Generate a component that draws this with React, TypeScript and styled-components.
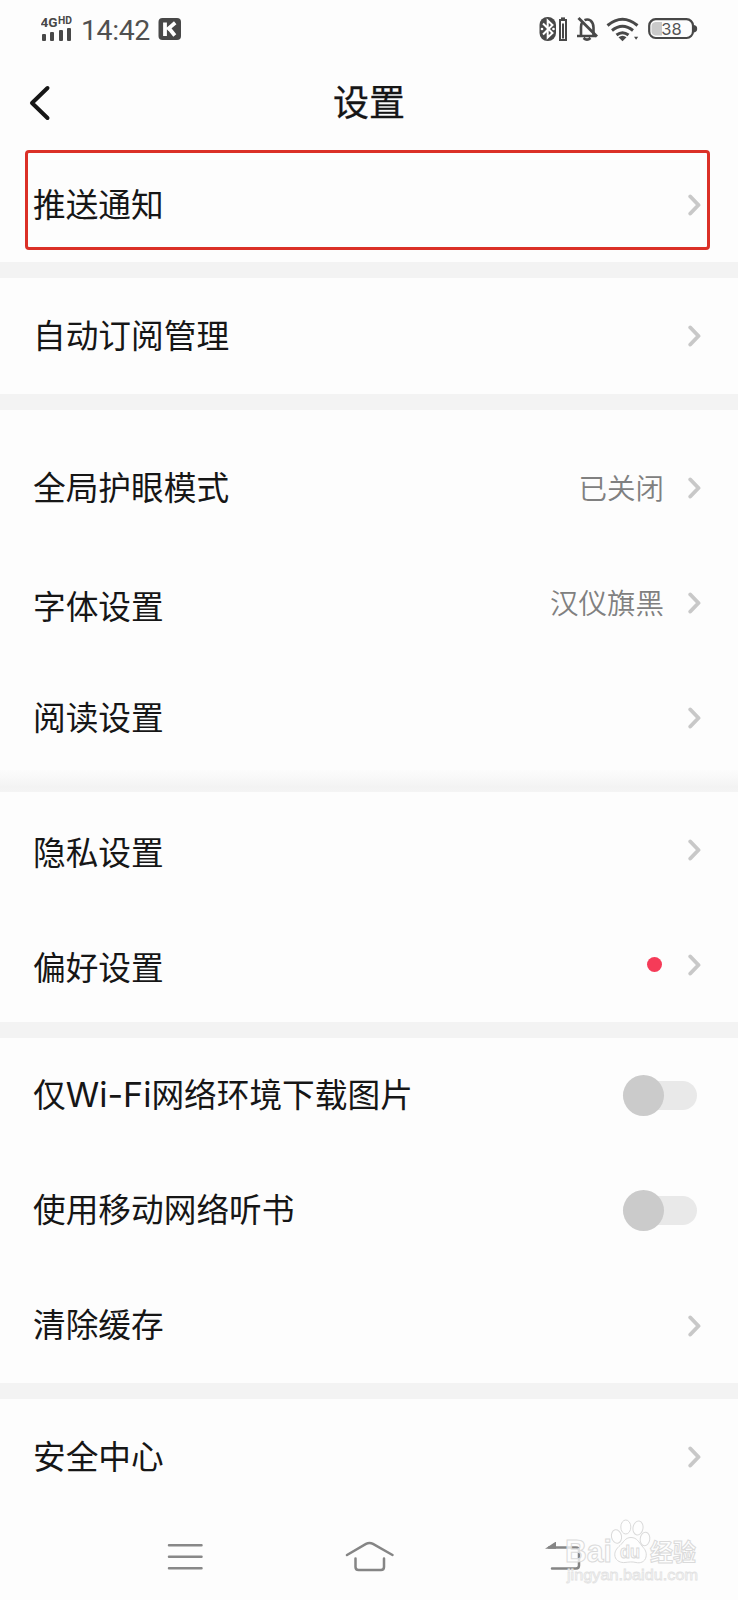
import React from "react";
import styled, { createGlobalStyle } from "styled-components";

const GlobalStyle = createGlobalStyle`
  * { box-sizing: border-box; }
  body {
    margin: 0;
    background: #fdfdfd;
    font-family: "Noto Sans CJK SC", sans-serif;
    color: #161616;
  }
  svg { display: block; flex: none; }
`;

const Screen = styled.div`
  position: relative;
  width: 738px;
  height: 1600px;
  overflow: hidden;
  background: #fdfdfd;
  display: flex;
  flex-direction: column;
`;

const StatusBar = styled.div`
  height: 58px;
  flex: none;
  padding: 0 40px 0 41px;
  display: flex;
  justify-content: space-between;
  align-items: center;
`;

const StatusGroup = styled.div<{ $gap?: number }>`
  display: flex;
  align-items: center;
  gap: ${(p) => p.$gap ?? 0}px;
`;

const Clock = styled.span`
  margin: 3px 8px 0 8px;
  width: 69px;
  font: 400 28.5px/32px Roboto, sans-serif;
  letter-spacing: -0.4px;
  color: #505050;
  white-space: nowrap;
`;

const Header = styled.header`
  height: 91px;
  flex: none;
  padding: 0 29px 2px;
  display: grid;
  grid-template-columns: 24px 1fr 24px;
  align-items: center;
`;

const Title = styled.h1`
  margin: 0;
  font-size: 36px;
  font-weight: 400;
  line-height: 54px;
  padding-bottom: 5px;
  text-align: center;
  -webkit-text-stroke: 0.3px #161616;
`;

const Section = styled.section<{ $top?: number; $bottom?: number }>`
  flex: none;
  padding-top: ${(p) => p.$top ?? 0}px;
  padding-bottom: ${(p) => p.$bottom ?? 0}px;
`;

const Divider = styled.div<{ $soft?: boolean }>`
  flex: none;
  height: ${(p) => (p.$soft ? 22 : 16)}px;
  margin-top: ${(p) => (p.$soft ? -5 : 0)}px;
  background: ${(p) =>
    p.$soft ? "linear-gradient(#fcfcfc, #f8f8f8 38%, #f3f3f3 75%, #f4f4f4)" : "#f3f3f3"};
`;

const RowBox = styled.div<{ $height: number }>`
  height: ${(p) => p.$height}px;
  padding: 0 37px 0 33px;
  display: flex;
  align-items: center;
  justify-content: space-between;
`;

const HighlightedRow = styled(RowBox)`
  margin: 0 28px 0 25px;
  padding: 10px 6px 0 5px;
  border: 3px solid #db3027;
  border-radius: 4px;
`;

const Label = styled.span<{ $drop?: number }>`
  font-size: 32.7px;
  line-height: 48px;
  padding-top: ${(p) => (p.$drop ?? 0) * 2}px;
  margin-top: -5px;
  white-space: nowrap;
`;

const Latin = styled.span`
  font-family: Inter, sans-serif;
  font-size: 34px;
  line-height: 1;
`;

const Trailing = styled.span`
  display: flex;
  align-items: center;
`;

const Value = styled.span`
  margin: -2px 24px 0 0;
  font-size: 28.5px;
  font-weight: 350;
  line-height: 40px;
  color: #808080;
`;

const Dot = styled.span`
  width: 15px;
  height: 15px;
  margin-right: 26px;
  border-radius: 50%;
  background: #f53b58;
`;

const Track = styled.span`
  width: 74px;
  height: 29px;
  margin-right: 4px;
  border-radius: 15px;
  background: #e9e9e9;
  display: flex;
  align-items: center;
`;

const Knob = styled.span`
  width: 41px;
  height: 41px;
  flex: none;
  border-radius: 50%;
  background: #cbcbcb;
`;

const NavBar = styled.nav`
  height: 86px;
  flex: none;
  padding: 0 154px 2px 167px;
  display: grid;
  grid-template-columns: 178px 1fr auto;
  align-items: center;
`;

const Watermark = styled.div`
  position: absolute;
  left: 560px;
  top: 1515px;
`;

function SignalIcon() {
  return (
    <svg width="32" height="28" viewBox="41 13 32 28" fill="#484848">
      <text x="40.5" y="25" fontFamily="Roboto" fontWeight="700" fontSize="13.5" textLength="17" lengthAdjust="spacingAndGlyphs">4G</text>
      <text x="58" y="22" fontFamily="Roboto" fontWeight="700" fontSize="10" textLength="14" lengthAdjust="spacingAndGlyphs">HD</text>
      <rect x="42" y="32" width="4" height="7" rx="1" />
      <rect x="50" y="30" width="4" height="9" rx="1" />
      <rect x="59" y="28" width="4" height="11" rx="1" />
      <rect x="67" y="26" width="4" height="13" rx="1" />
    </svg>
  );
}

function KBadge() {
  return (
    <svg width="24" height="24" viewBox="0 0 24 24">
      <rect x="0.5" y="1" width="22.5" height="22" rx="4" fill="#484848" />
      <path d="M7 5.5v13.5M17.2 5.8l-8 6.8M11.2 11.5l5.6 7" stroke="#fff" strokeWidth="3.8" fill="none" />
    </svg>
  );
}

function BluetoothIcon() {
  return (
    <svg width="30" height="28" viewBox="538 14 30 28">
      <rect x="539.5" y="16" width="16.5" height="24" rx="8" fill="#484848" />
      <path d="M543 22.5l9.5 9.5-4.8 4.5v-17l4.8 4.5-9.5 9.5" fill="none" stroke="#fff" strokeWidth="2" />
      <circle cx="542" cy="28" r="1.3" fill="#fff" />
      <circle cx="553.5" cy="28" r="1.3" fill="#fff" />
      <path d="M561 18v-1.6h4V18" fill="#484848" />
      <rect x="560" y="19" width="6" height="20" fill="#fff" stroke="#484848" strokeWidth="2" />
      <rect x="562" y="22.5" width="2" height="15" fill="#484848" />
    </svg>
  );
}

function MutedBellIcon() {
  return (
    <svg width="22" height="26" viewBox="576 16 22 26" fill="none" stroke="#484848" strokeWidth="2.6">
      <path d="M577 36h19M581 36v-9q0-3 1.5-5M584.5 20.2q3-1.5 6 0.3 3 2.5 3 7v8.5M583.5 38q3.5 3.2 7 0" />
      <path d="M578.5 18l18.5 18.5" strokeWidth="2.9" />
    </svg>
  );
}

function WifiIcon() {
  return (
    <svg width="34" height="26" viewBox="606 15 34 26" fill="none" stroke="#484848" strokeWidth="3">
      <path d="M607.5 24.5q15-12.5 30 0M612 29.5q10.5-8.5 21 0M616.5 34q6-4.500 12 0" />
      <path d="M618.5 36.3q4-3 8 0l-4 3.9z" fill="#484848" stroke="none" />
      <path d="M634 35.8h4.2l-2.100 3z" fill="#484848" stroke="none" />
    </svg>
  );
}

function BatteryIcon() {
  return (
    <svg width="50" height="24" viewBox="648 17 50 24">
      <path d="M655.5 22H662v13.5h-6.5q-4-0.5-4-4v-5.5q0-3.5 4-4z" fill="#cacaca" />
      <rect x="649.2" y="19.2" width="43.8" height="18.8" rx="6.5" fill="none" stroke="#484848" strokeWidth="2.2" />
      <path d="M694 25q3.2 0.5 3.2 3.7T694 32.4z" fill="#484848" />
      <text x="671.4" y="34.7" textAnchor="middle" fontFamily="Inter" fontSize="16.5" fill="#555">38</text>
    </svg>
  );
}

function BackIcon() {
  return (
    <svg width="24" height="36" viewBox="29 85 24 36">
      <path d="M47.5 88L32 103l15.5 15" fill="none" stroke="#161616" strokeWidth="4" strokeLinecap="round" strokeLinejoin="round" />
    </svg>
  );
}

function Arrow() {
  return (
    <svg width="13" height="22" viewBox="0 0 13 22">
      <path d="M2.3 2.5l8.2 8.5-8.2 8.5" fill="none" stroke="#c8c8c8" strokeWidth="3.9" strokeLinecap="round" strokeLinejoin="round" />
    </svg>
  );
}

function MenuIcon() {
  return (
    <svg width="36" height="28" viewBox="167 1543 36 28">
      <path d="M169 1545.3h32.5M169 1556.7h32.5M169 1568.3h32.5" stroke="#888" strokeWidth="2.5" strokeLinecap="round" />
    </svg>
  );
}

function HomeIcon() {
  return (
    <svg width="50" height="32" viewBox="345 1541 50 32" fill="none" stroke="#858585" strokeWidth="2.5" strokeLinecap="round">
      <path d="M347 1555l19-11.2q3.5-1.6 7 0l19.5 11.2" />
      <path d="M355.5 1558.500v8.500q0 3 3 3h22.500q3 0 3-3v-8.500" />
    </svg>
  );
}

function ReturnIcon() {
  return (
    <svg width="40" height="30" viewBox="544 1542 40 30" fill="none" stroke="#858585" strokeWidth="2.5" strokeLinecap="round">
      <path d="M549 1547.5h27q3 0 3 3v15q0 3-3 3h-24" />
      <path d="M545 1548.7l11-7.200v7.200z" fill="#858585" stroke="none" />
    </svg>
  );
}

function WatermarkArt() {
  return (
    <svg width="150" height="78" viewBox="560 1515 150 78" fill="#fdfdfd" fillOpacity="0.75" stroke="#dadada" strokeWidth="1">
      <text x="565" y="1561.5" fontFamily="Liberation Sans" fontWeight="700" fontSize="31" textLength="47" lengthAdjust="spacingAndGlyphs">Bai</text>
      <ellipse cx="616.5" cy="1536.5" rx="5" ry="6.8" transform="rotate(-12 616.5 1536.5)" />
      <ellipse cx="625.8" cy="1527" rx="5" ry="7" />
      <ellipse cx="638" cy="1528" rx="5" ry="7" transform="rotate(10 638 1528)" />
      <ellipse cx="645" cy="1539" rx="4.8" ry="6.8" transform="rotate(8 645 1539)" />
      <path d="M631 1537.5c6 0 8 5 11 8.500s5 6 4 11-6 6.500-10 5.500-7-.500-11 0-9-1.500-10-6 1.500-8 5-11 5-8 11-8z" />
      <text x="620" y="1558" fontFamily="Liberation Sans" fontWeight="700" fontSize="19" textLength="20" lengthAdjust="spacingAndGlyphs">du</text>
      <text x="650" y="1560.5" fontFamily="Noto Sans CJK SC" fontWeight="700" fontSize="23.5" textLength="46" lengthAdjust="spacingAndGlyphs">经验</text>
      <text x="567" y="1579.5" fontFamily="Liberation Sans" fontSize="15.5" stroke="#e2e2e2" strokeWidth="0.8" textLength="131" lengthAdjust="spacingAndGlyphs">jingyan.baidu.com</text>
    </svg>
  );
}

type RowProps = {
  label: React.ReactNode;
  height?: number;
  value?: string;
  dot?: boolean;
  toggle?: boolean;
  drop?: number;
};

function Row({ label, height = 115, value, dot, toggle, drop }: RowProps) {
  return (
    <RowBox $height={height}>
      <Label $drop={drop}>{label}</Label>
      <Trailing>
        {value && <Value>{value}</Value>}
        {dot && <Dot />}
        {toggle ? (
          <Track>
            <Knob />
          </Track>
        ) : (
          <Arrow />
        )}
      </Trailing>
    </RowBox>
  );
}

export default function App() {
  return (
    <>
      <GlobalStyle />
      <Screen>
        <StatusBar>
          <StatusGroup>
            <SignalIcon />
            <Clock>14:42</Clock>
            <KBadge />
          </StatusGroup>
          <StatusGroup $gap={8}>
            <BluetoothIcon />
            <MutedBellIcon />
            <WifiIcon />
            <BatteryIcon />
          </StatusGroup>
        </StatusBar>
        <Header>
          <BackIcon />
          <Title>设置</Title>
        </Header>
        <Section $top={1} $bottom={12}>
          <HighlightedRow $height={100}>
            <Label>推送通知</Label>
            <Arrow />
          </HighlightedRow>
        </Section>
        <Divider />
        <Section>
          <Row label="自动订阅管理" height={116} />
        </Section>
        <Divider />
        <Section $top={20}>
          <Row label="全局护眼模式" value="已关闭" drop={1} />
          <Row label="字体设置" value="汉仪旗黑" drop={5} />
          <Row label="阅读设置" drop={1} />
        </Section>
        <Divider $soft />
        <Section>
          <Row label="隐私设置" drop={4} />
          <Row label="偏好设置" dot drop={4} />
        </Section>
        <Divider />
        <Section>
          <Row label={<>仅<Latin>Wi-Fi</Latin>网络环境下载图片</>} toggle />
          <Row label="使用移动网络听书" toggle />
          <Row label="清除缓存" />
        </Section>
        <Divider />
        <Section>
          <Row label="安全中心" height={116} />
        </Section>
        <NavBar>
          <MenuIcon />
          <HomeIcon />
          <ReturnIcon />
        </NavBar>
        <Watermark>
          <WatermarkArt />
        </Watermark>
      </Screen>
    </>
  );
}
